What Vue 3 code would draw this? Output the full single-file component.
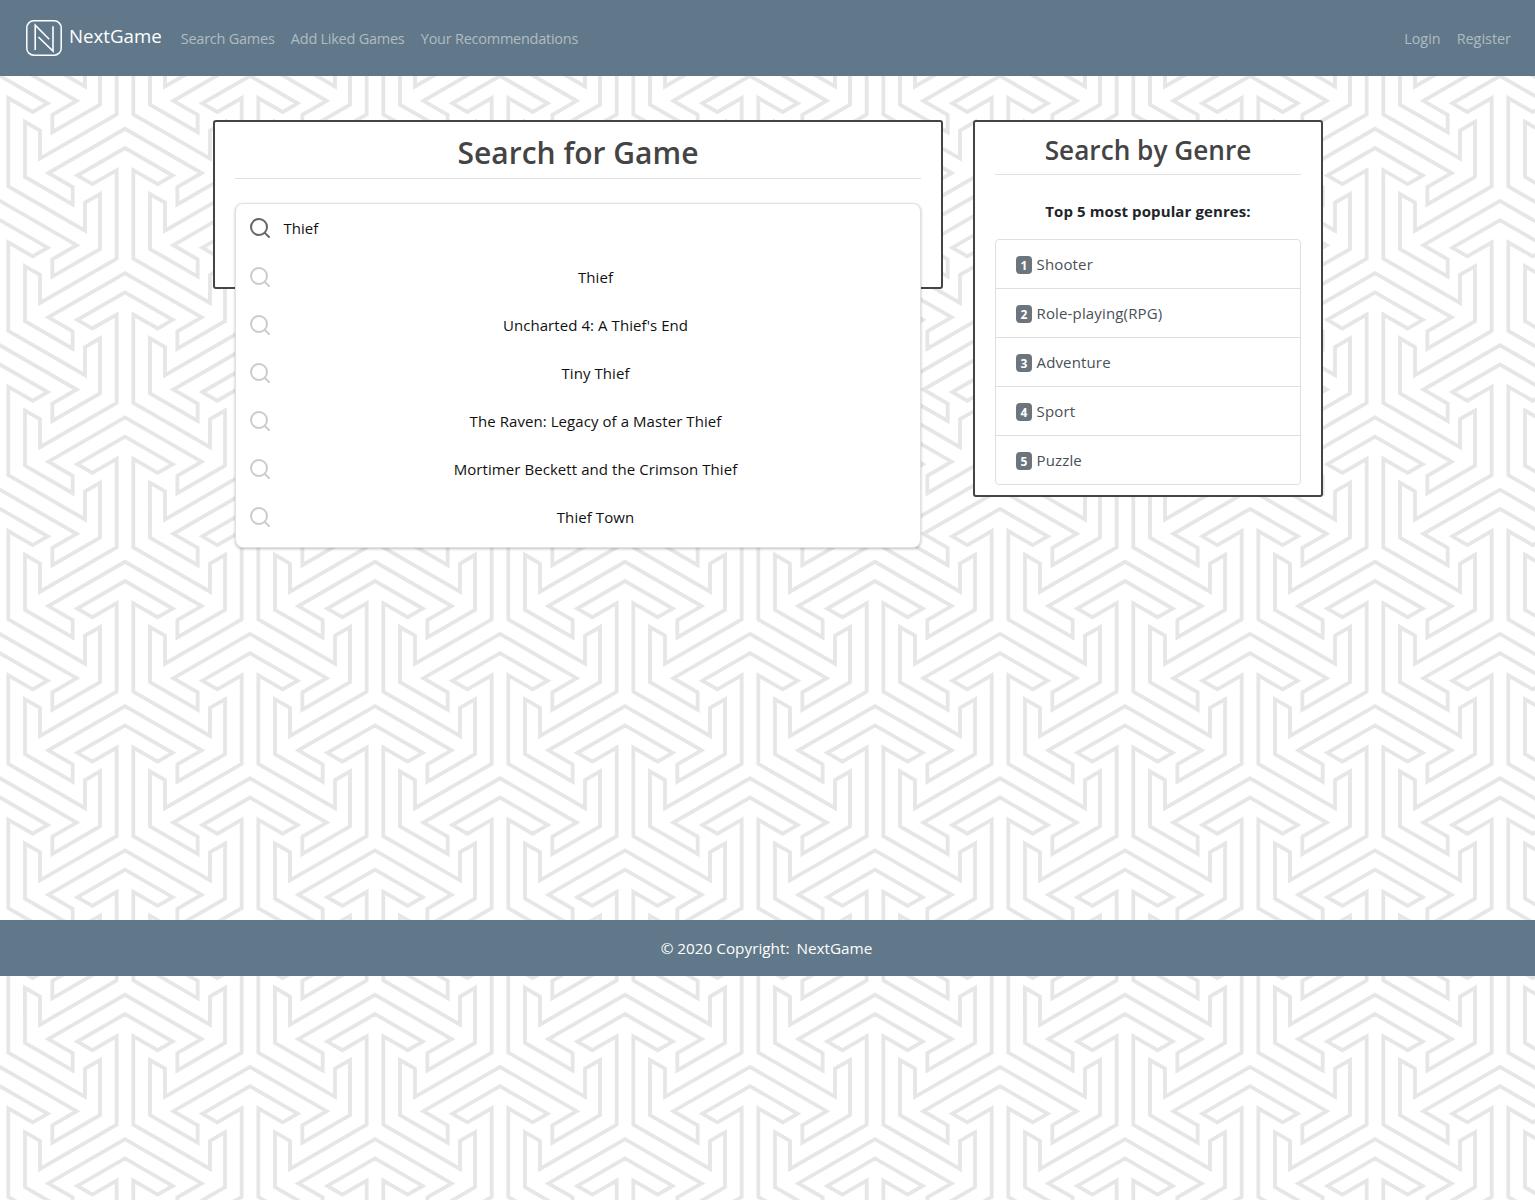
<script setup>
const navLinks = ['Search Games', 'Add Liked Games', 'Your Recommendations']
const accountLinks = ['Login', 'Register']
const query = 'Thief'
const suggestions = [
  'Thief',
  "Uncharted 4: A Thief's End",
  'Tiny Thief',
  'The Raven: Legacy of a Master Thief',
  'Mortimer Beckett and the Crimson Thief',
  'Thief Town',
]
const genres = ['Shooter', 'Role-playing(RPG)', 'Adventure', 'Sport', 'Puzzle']

// One arm of the three-armed background motif; the other two are rotations of it.
const arm = [
  [-8.33, -4.81], [-8.33, -93.3], [-32.67, -79.3], [-47.67, -87.97], [0, -115.47],
  [47.67, -87.97], [32.67, -79.3], [8.33, -93.3], [8.33, -4.81],
]
const rotate = ([x, y], deg) => {
  const a = (deg * Math.PI) / 180
  return [x * Math.cos(a) - y * Math.sin(a), x * Math.sin(a) + y * Math.cos(a)]
}
const motif = [0, 120, 240]
  .flatMap((deg) => arm.map((p) => rotate(p, deg)))
  .map((p) => p.map((n) => n.toFixed(2)).join(','))
  .join(' ')

const tileW = 250
const tileH = 144.34
const spots = []
for (let r = -6; r <= 5; r++) {
  for (let c = -1; c <= 13; c++) {
    const odd = Math.abs(c) % 2
    spots.push({ x: 125 + (c * tileW) / 2, y: 696.5 + r * tileH + (odd * tileH) / 2 })
  }
}
</script>

<template>
  <div class="page">
    <svg class="backdrop" width="1535" height="1200" aria-hidden="true">
      <defs>
        <polygon id="motif" :points="motif" fill="none" stroke="#e6e6e6" stroke-width="3.8" stroke-miterlimit="10" />
      </defs>
      <use v-for="(s, i) in spots" :key="i" href="#motif" :x="s.x" :y="s.y" />
    </svg>

    <header class="navbar">
      <a class="brand">
        <svg width="36" height="36" viewBox="0 0 36 36" fill="none" stroke="#fff">
          <rect x="0.8" y="0.8" width="34.4" height="34.4" rx="7" stroke-width="1.5" />
          <path d="M9.2 30V5.2L23.2 19.2M12.4 17L27 31V6.3" stroke-width="1.6" />
        </svg>
        <span>NextGame</span>
      </a>
      <nav class="links">
        <a v-for="l in navLinks" :key="l">{{ l }}</a>
      </nav>
      <nav class="links account">
        <a v-for="l in accountLinks" :key="l">{{ l }}</a>
      </nav>
    </header>

    <main class="content">
      <section class="panel search">
        <h2>Search for Game</h2>
        <div class="searchbox">
          <div class="row field">
            <svg class="lens" width="20" height="20" viewBox="0 0 20 20"><circle cx="9" cy="9" r="8" /><path d="M14.6 14.6L19.6 19.6" /></svg>
            <span>{{ query }}</span>
          </div>
          <div v-for="s in suggestions" :key="s" class="row">
            <svg class="lens pale" width="20" height="20" viewBox="0 0 20 20"><circle cx="9" cy="9" r="8" /><path d="M14.6 14.6L19.6 19.6" /></svg>
            <span class="suggestion">{{ s }}</span>
          </div>
        </div>
      </section>

      <section class="panel genre">
        <h3>Search by Genre</h3>
        <p class="top">Top 5 most popular genres:</p>
        <ul>
          <li v-for="(g, i) in genres" :key="g">
            <span class="badge">{{ i + 1 }}</span><span>{{ g }}</span>
          </li>
        </ul>
      </section>
    </main>

    <footer class="footer"><span>© 2020 Copyright:</span><a>NextGame</a></footer>
  </div>
</template>

<style>
body { margin: 0; background: #fff; }
</style>

<style scoped>
.page {
  position: relative;
  height: 1200px;
  overflow: hidden;
  font-family: "Open Sans", "Noto Sans", sans-serif;
  font-size: 15px;
  line-height: 24px;
  color: #212529;
}
.page * { box-sizing: border-box; }
.backdrop { position: absolute; inset: 0; display: block; }
.navbar {
  position: relative;
  display: flex;
  align-items: center;
  height: 76px;
  padding: 0 24px 0 26px;
  background: #607889;
}
.brand { display: flex; align-items: center; gap: 7px; color: #fff; font-size: 18.7px; }
.brand span { position: relative; top: -2px; }
.links {
  display: flex;
  gap: 16.3px;
  margin-left: 19px;
  padding-top: 2px;
  color: rgba(255, 255, 255, 0.5);
  font-size: 14.5px;
  letter-spacing: -0.25px;
}
.account { margin-left: auto; font-size: 14.4px; letter-spacing: 0; gap: 16px; }
.content {
  position: relative;
  display: flex;
  align-items: flex-start;
  gap: 30px;
  height: 844px;
  padding: 44px 0 0 213px;
}
.panel { background: #fff; border: 2px solid #444; border-radius: 3px; padding: 0 20px; }
.search { width: 730px; height: 169px; }
.genre { width: 350px; height: 377px; }
h2, h3 { margin: 0; text-align: center; font-weight: 600; color: #444; border-bottom: 1px solid #dee2e6; }
h2 { height: 57px; line-height: 61px; font-size: 30px; }
h3 { height: 53px; line-height: 56px; font-size: 26.2px; }
.searchbox {
  margin-top: 24px;
  height: 345px;
  border: 1px solid #dfe1e5;
  border-radius: 8px;
  background: #fff;
  box-shadow: 0 1px 3px rgba(32, 33, 36, 0.28);
  color: #111;
}
.row { display: flex; align-items: center; height: 48px; padding: 0 0 0 14px; }
.field { margin-bottom: 1px; gap: 13.5px; }
.lens { flex: none; fill: none; stroke: #656565; stroke-width: 2; }
.pale { stroke: #ccc; }
.suggestion { flex: 1; margin-left: 1px; text-align: center; letter-spacing: 0.07px; }
.top { margin: 24px 0 16px; text-align: center; font-weight: 700; letter-spacing: 0.1px; }
ul { list-style: none; margin: 0; padding: 0; border: 1px solid #dfdfdf; border-radius: 4px; color: #495057; }
li { display: flex; align-items: center; gap: 4.5px; height: 49px; padding: 0 20px; border-bottom: 1px solid #dfdfdf; letter-spacing: 0.15px; }
li:last-child { height: 48px; border-bottom: 0; }
.badge {
  position: relative;
  top: 0.5px;
  width: 16px;
  height: 18px;
  border-radius: 4px;
  background: #6c757d;
  color: #fff;
  font-size: 12px;
  font-weight: 700;
  line-height: 19px;
  text-align: center;
  letter-spacing: 0;
}
.footer {
  position: relative;
  display: flex;
  justify-content: center;
  gap: 7px;
  height: 56px;
  padding-right: 2px;
  line-height: 56px;
  font-size: 15.3px;
  color: #fff;
  background: #607889;
}
</style>
